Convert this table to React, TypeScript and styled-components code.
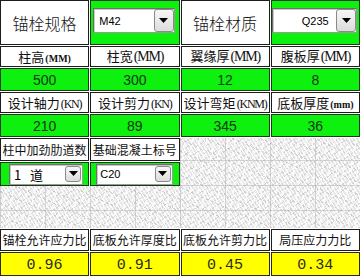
import React from 'react';
import styled, { createGlobalStyle } from 'styled-components';

type Tone = 'white' | 'green' | 'yellow';

const GlobalStyle = createGlobalStyle`
  html, body {
    margin: 0;
    padding: 0;
    background: #ffffff;
  }
  body {
    font-family: 'Noto Sans CJK SC', 'Liberation Sans', sans-serif;
  }
`;

const App = () => {
  return (
    <>
      <GlobalStyle />
      <Sheet>
        <TopGrid>
          <Cell $tone="white">
            <Title>锚栓规格</Title>
          </Cell>
          <Cell $tone="green" $align="start" $pad="7px 4px 0 2px">
            <ComboBox value="M42" height={25} button="large" textPad="5px" />
          </Cell>
          <Cell $tone="white">
            <Title>锚栓材质</Title>
          </Cell>
          <Cell $tone="green" $align="start" $pad="7px 2px 0 0">
            <ComboBox value="Q235" height={25} button="large" textPad="29px" />
          </Cell>

          <Cell $tone="white">
            <Label>柱高<Unit $small>(MM)</Unit></Label>
          </Cell>
          <Cell $tone="white">
            <Label>柱宽<Unit>(MM)</Unit></Label>
          </Cell>
          <Cell $tone="white">
            <Label>翼缘厚<Unit>(MM)</Unit></Label>
          </Cell>
          <Cell $tone="white">
            <Label>腹板厚<Unit>(MM)</Unit></Label>
          </Cell>

          {['500', '300', '12', '8'].map((v) => (
            <Cell key={v} $tone="green">
              <Value>{v}</Value>
            </Cell>
          ))}

          <Cell $tone="white">
            <Label>设计轴力<Unit $tight>(KN)</Unit></Label>
          </Cell>
          <Cell $tone="white">
            <Label>设计剪力<Unit $tight>(KN)</Unit></Label>
          </Cell>
          <Cell $tone="white">
            <Label>设计弯矩<Unit $tight>(KNM)</Unit></Label>
          </Cell>
          <Cell $tone="white">
            <Label>底板厚度<Unit $small>(mm)</Unit></Label>
          </Cell>

          {['210', '89', '345', '36'].map((v) => (
            <Cell key={v} $tone="green">
              <Value>{v}</Value>
            </Cell>
          ))}
        </TopGrid>

        <Middle>
          <LeftPanel>
            <Cell $tone="white">
              <Label $size={12}>柱中加劲肋道数</Label>
            </Cell>
            <Cell $tone="white">
              <Label $size={12}>基础混凝土标号</Label>
            </Cell>
            <Cell $tone="green" $pad="0 5px 0 8px">
              <ComboBox value={'1\u00a0\u00a0\u00a0道'} height={21} button="small" textPad="4px" cjk />
            </Cell>
            <Cell $tone="green" $pad="0 6px 0 5px">
              <ComboBox value="C20" height={21} button="small" textPad="3px" />
            </Cell>
          </LeftPanel>
        </Middle>

        <BottomGrid>
          <Cell $tone="white">
            <Label $size={12}>锚栓允许应力比</Label>
          </Cell>
          <Cell $tone="white">
            <Label $size={12}>底板允许厚度比</Label>
          </Cell>
          <Cell $tone="white">
            <Label $size={12}>底板允许剪力比</Label>
          </Cell>
          <Cell $tone="white">
            <Label $size={12}>局压应力力比</Label>
          </Cell>
          {['0.96', '0.91', '0.45', '0.34'].map((v) => (
            <Cell key={v} $tone="yellow">
              <Ratio>{v}</Ratio>
            </Cell>
          ))}
        </BottomGrid>
      </Sheet>
    </>
  );
};

interface ComboBoxProps {
  value: string;
  height: number;
  button: 'large' | 'small';
  textPad: string;
  cjk?: boolean;
}

// 下拉框
const ComboBox = ({ value, height, button, textPad, cjk }: ComboBoxProps) => (
  <ComboFrame $h={height}>
    <ComboText $pad={textPad} $cjk={!!cjk}>{value}</ComboText>
    <DropButton $size={button}>
      <svg width="9" height="5" viewBox="0 0 9 5">
        <polygon points="0,0 9,0 4.5,5" fill="#000" />
      </svg>
    </DropButton>
  </ComboFrame>
);

const Sheet = styled.div`
  width: 360px;
  height: 276px;
  overflow: hidden;
  display: flex;
  flex-direction: column;
  gap: 1px;
  background: #ffffff;
`;

const TopGrid = styled.div`
  display: grid;
  grid-template-columns: repeat(4, 1fr);
  grid-template-rows: 45px 21px 23px 21px 23px;
  gap: 1px;
`;

// 表格背景的大理石纹理
const Middle = styled.div`
  height: 90px;
  display: grid;
  grid-template-columns: repeat(4, 1fr);
  grid-template-rows: 48px 1fr;
  column-gap: 1px;
  background-color: #e9e9e9;
  background-image:
    linear-gradient(rgba(170, 170, 170, 0.45) 1px, transparent 1px),
    linear-gradient(90deg, rgba(170, 170, 170, 0.45) 1px, transparent 1px),
    repeating-linear-gradient(58deg, rgba(255, 255, 255, 0.9) 0 1px, transparent 1px 3px),
    repeating-linear-gradient(-35deg, rgba(185, 185, 185, 0.5) 0 1px, transparent 1px 5px),
    repeating-linear-gradient(24deg, rgba(160, 160, 160, 0.35) 0 1px, transparent 1px 11px),
    repeating-linear-gradient(100deg, rgba(255, 255, 255, 0.7) 0 2px, transparent 2px 7px);
  background-size: 45px 25px, 45px 25px, auto, auto, auto, auto;
  background-position: 0 22px, 0 0, 0 0, 0 0, 0 0, 0 0;
`;

const LeftPanel = styled.div`
  grid-column: 1 / 3;
  grid-row: 1;
  display: grid;
  grid-template-columns: repeat(2, 1fr);
  grid-template-rows: 23px 24px;
  gap: 1px;
  padding-bottom: 1px;
  background: #ffffff;
`;

const BottomGrid = styled.div`
  display: grid;
  grid-template-columns: repeat(4, 1fr);
  grid-template-rows: 22px 24px;
  gap: 1px;
`;

const toneBg: Record<Tone, string> = {
  white: '#ffffff',
  green: '#0ef00e',
  yellow: '#ffff00',
};

const toneBorder: Record<Tone, string> = {
  white: '#1c1c1c',
  green: '#1b3a1b',
  yellow: '#2a2a10',
};

const Cell = styled.div<{ $tone: Tone; $align?: 'start' | 'center'; $pad?: string }>`
  box-sizing: border-box;
  min-width: 0;
  overflow: hidden;
  display: flex;
  align-items: ${(p) => (p.$align === 'start' ? 'flex-start' : 'center')};
  justify-content: center;
  padding: ${(p) => p.$pad ?? '0'};
  background: ${(p) => toneBg[p.$tone]};
  border: 1px solid ${(p) => toneBorder[p.$tone]};
`;

const Title = styled.span`
  font-family: 'Noto Sans CJK SC', sans-serif;
  font-size: 16px;
  font-weight: 300;
  color: #111;
`;

const Label = styled.span<{ $size?: number }>`
  font-family: 'Noto Sans CJK SC', sans-serif;
  font-size: ${(p) => p.$size ?? 13}px;
  line-height: 1;
  color: #111;
  white-space: nowrap;
`;

const Unit = styled.span<{ $small?: boolean; $tight?: boolean }>`
  font-family: 'Liberation Serif', serif;
  font-size: ${(p) => (p.$small ? 10 : p.$tight ? 12 : 14)}px;
  font-weight: ${(p) => (p.$small ? 700 : 400)};
  letter-spacing: ${(p) => (p.$small ? '0' : '-1.2px')};
  margin-left: 1px;
`;

const Value = styled.span`
  font-family: 'Liberation Sans', sans-serif;
  font-size: 14px;
  color: #173517;
`;

const Ratio = styled.span`
  font-family: 'Liberation Mono', monospace;
  font-size: 15px;
  color: #2a2a2a;
  padding-top: 2px;
`;

const ComboFrame = styled.div<{ $h: number }>`
  box-sizing: border-box;
  flex: 1;
  height: ${(p) => p.$h}px;
  display: flex;
  align-items: stretch;
  background: #ffffff;
  border: 1px solid #9a9a9a;
  border-top-color: #6e6e6e;
  border-left-color: #6e6e6e;
  box-shadow: inset 1px 1px 0 #c8c8c8;
`;

const ComboText = styled.span<{ $pad: string; $cjk: boolean }>`
  flex: 1;
  display: flex;
  align-items: center;
  padding-left: ${(p) => p.$pad};
  font-family: ${(p) => (p.$cjk ? "'Noto Sans CJK SC', 'Liberation Sans', sans-serif" : "'Liberation Sans', sans-serif")};
  font-size: ${(p) => (p.$cjk ? 13 : 11)}px;
  color: #000;
  white-space: pre;
`;

const DropButton = styled.span<{ $size: 'large' | 'small' }>`
  box-sizing: border-box;
  width: ${(p) => (p.$size === 'large' ? 20 : 16)}px;
  margin: ${(p) => (p.$size === 'large' ? '0' : '1px 1px 2px 0')};
  display: flex;
  align-items: center;
  justify-content: center;
  border: 1px solid #8a8a8a;
  border-radius: 3px;
  background: linear-gradient(#f7f7f7, #dcdcdc);
`;

export default App;
